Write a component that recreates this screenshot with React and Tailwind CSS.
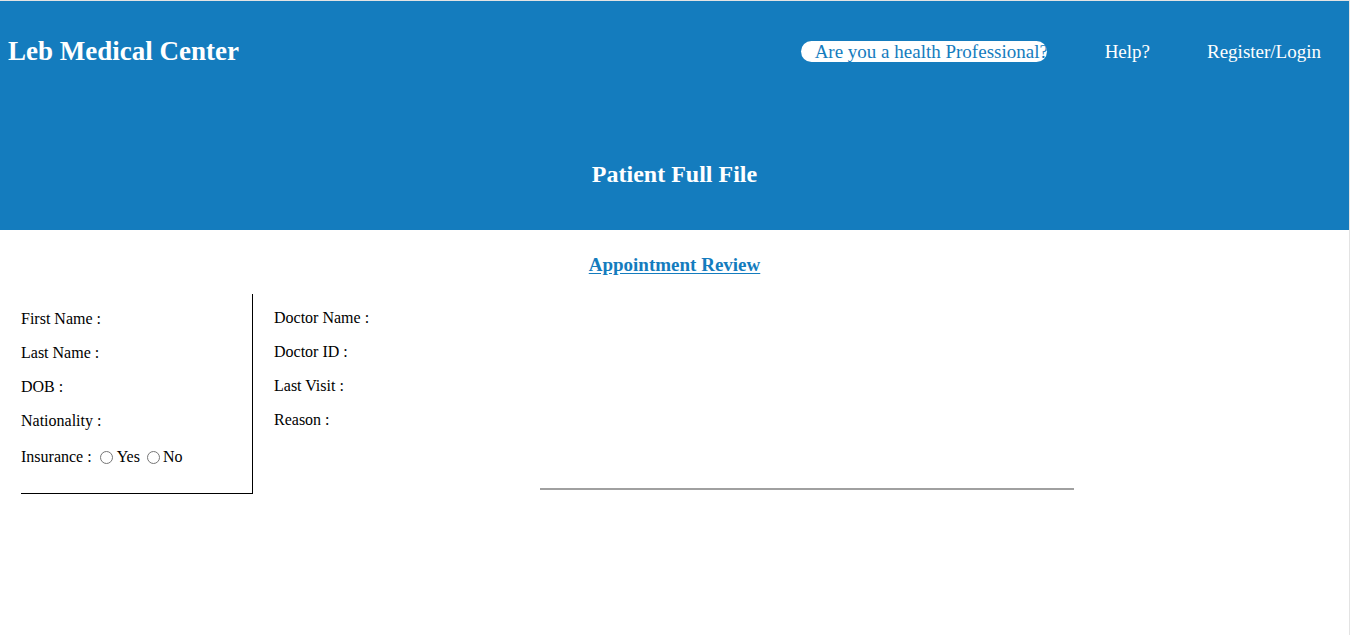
import React from 'react'

const serif = { fontFamily: '"Liberation Serif", "Times New Roman", serif' };

const patientFields = ["First Name :", "Last Name :", "DOB :", "Nationality :"];
const visitFields = ["Doctor Name :", "Doctor ID :", "Last Visit :", "Reason :"];

const App = () => {
  return (
    <div
      className="min-h-[635px] bg-white border-t border-r border-[#e3e3e3] text-black"
      style={serif}
    >
      <header className="bg-[#147cbe] h-[229px] flex flex-col">
        <nav className="flex items-center h-[101px] pl-[8px] pr-[28px]">
          <h1 className="text-white font-bold text-[27px] leading-none">Leb Medical Center</h1>
          <div className="ml-auto flex items-center text-[19px] leading-none">
            <span className="bg-white text-[#147cbe] rounded-full h-[21px] w-[246px] flex items-center pl-[14px] whitespace-nowrap overflow-hidden">
              Are you a health Professional?
            </span>
            <a className="text-white ml-[58px]">Help?</a>
            <a className="text-white ml-[57px]">Register/Login</a>
          </div>
        </nav>
        <h2 className="text-white font-bold text-[24px] text-center mt-[60px] leading-none">
          Patient Full File
        </h2>
      </header>

      <main>
        <h3 className="text-center pt-[25px] leading-none">
          <a className="text-[#147cbe] font-bold text-[19px] underline underline-offset-2">
            Appointment Review
          </a>
        </h3>

        <div className="flex mt-[20px]">
          <div className="ml-[21px] w-[232px] h-[200px] border-r border-b border-black pt-[16px] text-[16px]">
            {patientFields.map((f) => (
              <div key={f} className="h-[34px] leading-[18px]">{f}</div>
            ))}
            <div className="flex items-center h-[20px] leading-[18px] mt-[1px]">
              <span>Insurance :</span>
              <label className="flex items-center ml-[8px]">
                <span className="w-[13px] h-[13px] rounded-full border border-[#767676] bg-white inline-block mr-[4px]"></span>
                Yes
              </label>
              <label className="flex items-center ml-[7px]">
                <span className="w-[13px] h-[13px] rounded-full border border-[#767676] bg-white inline-block mr-[3px]"></span>
                No
              </label>
            </div>
          </div>

          <div className="flex-1 flex flex-col">
            <div className="pl-[21px] pt-[15px] text-[16px]">
              {visitFields.map((f) => (
                <div key={f} className="h-[34px] leading-[18px]">{f}</div>
              ))}
            </div>
            <hr className="ml-[287px] w-[534px] mt-[43px] border-0 border-t-2 border-[#a0a0a0]" />
          </div>
        </div>
      </main>
    </div>
  );
};

export default App
